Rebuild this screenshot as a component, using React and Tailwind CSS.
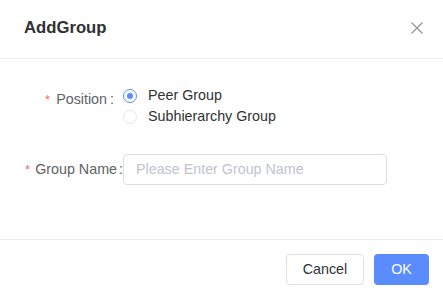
import React from "react";

export default function App() {
  return (
    <div className="w-[443px] h-[298px] bg-white flex flex-col text-[14.3px]" style={{ fontFamily: '"Liberation Sans", Arial, sans-serif' }}>
      <div className="h-[59px] border-b border-[#ebeef5] flex items-center justify-between pl-6 pr-[19px] shrink-0">
        <div className="text-[16.7px] font-bold text-[#303133] pb-[2px]">AddGroup</div>
        <svg width="14" height="14" viewBox="0 0 14 14" className="mb-[2px]">
          <path d="M1.5 1.5 L12.5 12.5 M12.5 1.5 L1.5 12.5" stroke="#909399" strokeWidth="1.2" fill="none" />
        </svg>
      </div>
      <div className="flex-1 flex flex-col pt-[26px]">
        <div className="flex items-start">
          <div className="w-[114px] h-[30px] flex items-center justify-end text-[#606266]">
            <span className="text-[#f56c6c] mr-[6px] text-[13px]">*</span>
            <span>Position</span>
            <span className="ml-[3px]">:</span>
          </div>
          <div className="ml-[9px] flex flex-col">
            <label className="flex items-center h-[21px] text-[#303133]">
              <span className="w-[14px] h-[14px] rounded-full border border-[#5b8cff] flex items-center justify-center">
                <span className="w-[6px] h-[6px] rounded-full bg-[#5b8cff]" />
              </span>
              <span className="ml-[11px]">Peer Group</span>
            </label>
            <label className="flex items-center h-[21px] text-[#303133]">
              <span className="w-[14px] h-[14px] rounded-full border border-[#e4e7ed] bg-white" />
              <span className="ml-[11px]">Subhierarchy Group</span>
            </label>
          </div>
        </div>
        <div className="flex items-center mt-[27px]">
          <div className="w-[123px] flex items-center justify-end text-[#606266]">
            <span className="text-[#f56c6c] mr-[5px] text-[13px]">*</span>
            <span>Group Name</span>
            <span className="ml-[2px]">:</span>
          </div>
          <div className="w-[264px] h-[31px] border border-[#dcdfe6] rounded-[4px] flex items-center px-3 text-[#c0c4cc]">
            Please Enter Group Name
          </div>
        </div>
      </div>
      <div className="h-[59px] border-t border-[#ebeef5] flex items-start justify-end pt-[14px] pr-[14px] gap-[10px] shrink-0">
        <button className="w-[78px] h-[31px] border border-[#dcdfe6] rounded-[4px] text-[#303133] bg-white">Cancel</button>
        <button className="w-[55px] h-[31px] rounded-[4px] text-white bg-[#5b8cff]">OK</button>
      </div>
    </div>
  );
}
